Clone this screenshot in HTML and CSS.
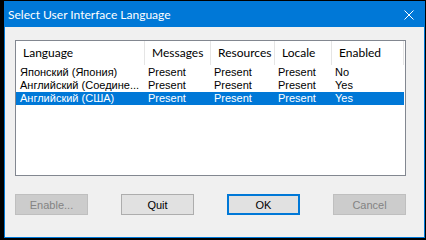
FILE: index.html
```html
<!DOCTYPE html>
<html lang="en">
<head>
  <meta charset="UTF-8">
  <title>Select User Interface Language</title>
  <link rel="stylesheet" href="styles.css">
</head>
<body>
  <div class="window">
    <div class="titlebar">
      <span class="title">Select User Interface Language</span>
      <svg class="close" width="10" height="10" viewBox="0 0 10 10">
        <path d="M0.5 0.5 L9.5 9.5 M9.5 0.5 L0.5 9.5" stroke="#fff" stroke-width="1" fill="none"/>
      </svg>
    </div>

    <div class="content">
      <div class="listbox">
        <div class="list-head">
          <div class="head-cell">Language</div>
          <div class="head-cell">Messages</div>
          <div class="head-cell">Resources</div>
          <div class="head-cell">Locale</div>
          <div class="head-cell">Enabled</div>
        </div>
        <div class="list-row">
          <div class="cell first">Японский (Япония)</div>
          <div class="cell">Present</div>
          <div class="cell">Present</div>
          <div class="cell">Present</div>
          <div class="cell">No</div>
        </div>
        <div class="list-row">
          <div class="cell first">Английский (Соедине...</div>
          <div class="cell">Present</div>
          <div class="cell">Present</div>
          <div class="cell">Present</div>
          <div class="cell">Yes</div>
        </div>
        <div class="list-row selected">
          <div class="cell first">Английский (США)</div>
          <div class="cell">Present</div>
          <div class="cell">Present</div>
          <div class="cell">Present</div>
          <div class="cell">Yes</div>
        </div>
      </div>

      <div class="buttons">
        <button class="btn" disabled>Enable...</button>
        <button class="btn">Quit</button>
        <button class="btn default">OK</button>
        <button class="btn cancel" disabled>Cancel</button>
      </div>
    </div>
  </div>
</body>
</html>
```

FILE: styles.css
```css
body {
  margin: 0;
  background: #000;
}

.window {
  box-sizing: border-box;
  width: 421px;
  height: 237px;
  margin: 1px 0 0 4px;
  border: 1px solid #0078d7;
  background: #f0f0f0;
  display: flex;
  flex-direction: column;
}

.titlebar {
  height: 25px;
  background: #0078d7;
  display: flex;
  align-items: center;
  justify-content: space-between;
  padding-left: 3px;
}

.title {
  font-family: Lato, "Noto Sans", sans-serif;
  font-size: 12px;
  color: #fff;
}

.close {
  margin-right: 10px;
}

.content {
  padding: 13px 18px 0 10px;
}

.listbox {
  box-sizing: border-box;
  height: 136px;
  border: 1px solid #828790;
  background: #fff;
}

.list-head,
.list-row {
  display: grid;
  grid-template-columns: 129px 66px 64px 57px 72px;
  width: 388px;
}

.head-cell {
  box-sizing: border-box;
  height: 24px;
  line-height: 24px;
  padding-left: 7px;
  border-right: 1px solid #e5e5e5;
  font-family: Lato, "Noto Sans", sans-serif;
  font-size: 12px;
  color: #000;
}

.list-row {
  height: 13px;
}

.list-head + .list-row {
  margin-top: 1px;
}

.cell {
  padding-left: 3px;
  line-height: 13px;
  font-family: "Liberation Sans", Arial, sans-serif;
  font-size: 11px;
  color: #000;
  white-space: nowrap;
  overflow: hidden;
}

.cell.first {
  padding-left: 4px;
}

.list-row.selected {
  background: #0078d7;
}

.list-row.selected .cell {
  color: #fff;
}

.buttons {
  display: flex;
  gap: 33px;
  margin-top: 18px;
}

.btn {
  box-sizing: border-box;
  width: 74px;
  height: 21px;
  padding: 0;
  background: #e1e1e1;
  border: 1px solid #adadad;
  font-family: "Liberation Sans", Arial, sans-serif;
  font-size: 11px;
  color: #000;
}

.btn:disabled {
  background: #cccccc;
  border-color: #bfbfbf;
  color: #838383;
}

.btn.default {
  border: 2px solid #0078d7;
}

.btn.cancel {
  margin-left: auto;
}
```
